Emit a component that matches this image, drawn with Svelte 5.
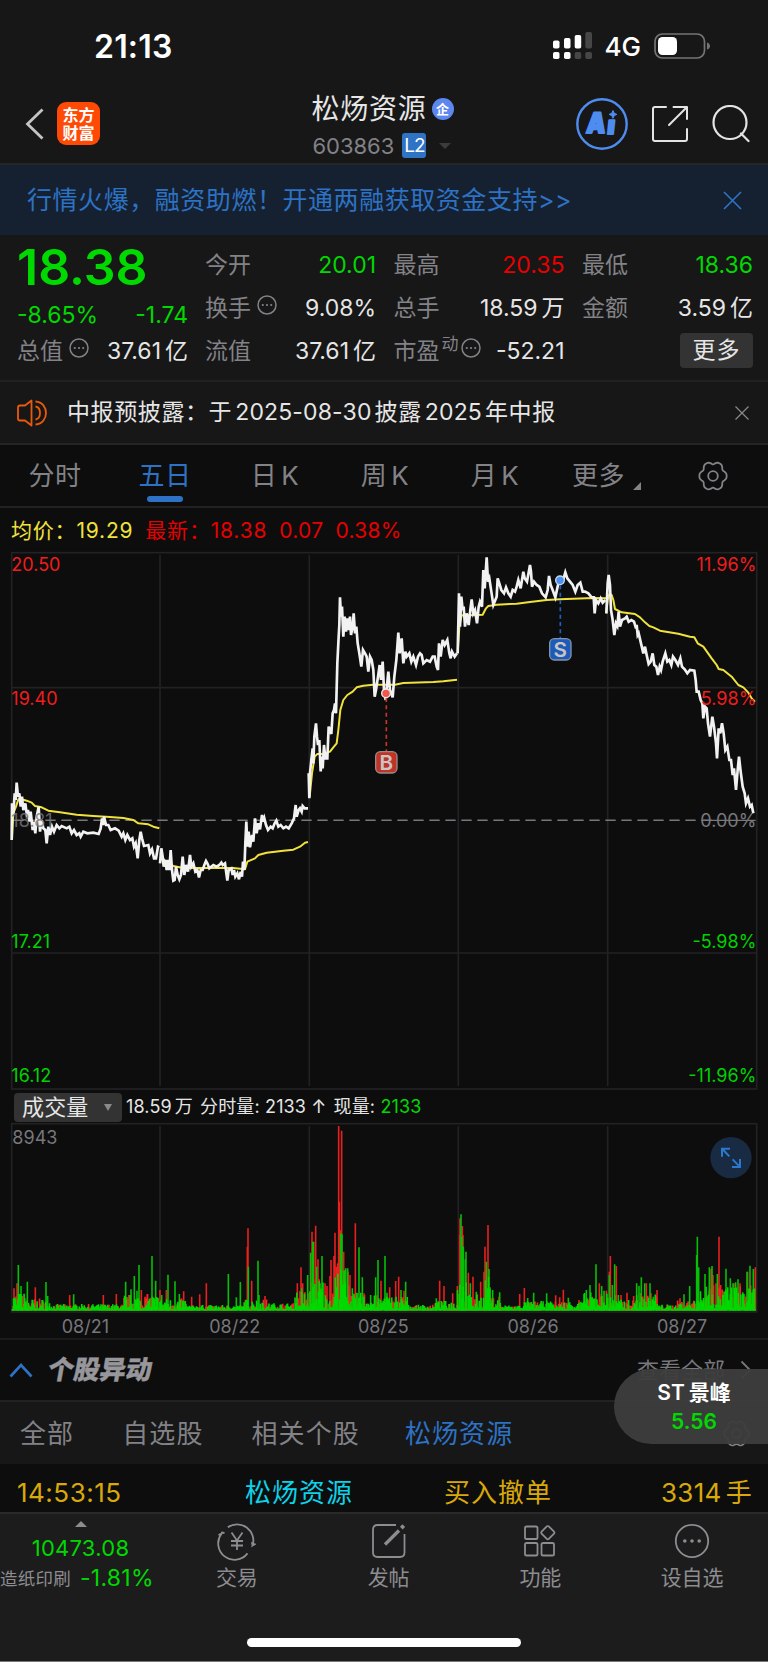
<script lang="ts">
	type Tone = 'up' | 'down' | 'plain';

	const quotes: { label: string; value: string; tone: Tone; info?: boolean; sup?: string }[] = [
		{ label: '今开', value: '20.01', tone: 'down' },
		{ label: '最高', value: '20.35', tone: 'up' },
		{ label: '最低', value: '18.36', tone: 'down' },
		{ label: '换手', value: '9.08%', tone: 'plain', info: true },
		{ label: '总手', value: '18.59 万', tone: 'plain' },
		{ label: '金额', value: '3.59 亿', tone: 'plain' },
		{ label: '流值', value: '37.61 亿', tone: 'plain' },
		{ label: '市盈', value: '-52.21', tone: 'plain', info: true, sup: '动' }
	];

	const periods = ['分时', '五日', '日 K', '周 K', '月 K'];
	let period = $state('五日');

	const filters = ['全部', '自选股', '相关个股', '松炀资源'];
	let filter = $state('松炀资源');

	let showBanner = $state(true);
	let showNotice = $state(true);

	// chart geometry is kept in @3x units
	const gridX = [480, 928, 1375, 1823];

	const price = [
		'35,990 36,880 40,915 44,850 47,870 50,818 54,860 58,850 62,890 66,860 70,900 76,880 80,910 84,900 88,935 92,905 98,960 102,935 106,970 110,920 116,890 120,965 125,930 130,955 136,960 140,1000 145,950 150,975 156,950 162,965 170,945 178,955 185,948 200,955 208,950 215,970 222,960 230,975 238,970 242,980 250,965 262,970 280,968 296,972 302,955 306,925 309,945 312,920 318,945 325,945 332,960 345,955 356,962 365,980 370,970 376,990 382,975 390,990 397,985 402,1010 407,1000 413,1045 418,990 422,965 426,985 432,1008 445,1005 450,1030 456,1018 462,1045 468,1045 474,1010 478,1012',
		'480,1060 484,1015 488,1040 491,1070 496,1050 500,1080 504,1050 508,1080 512,1020 516,1080 520,1112 524,1110 528,1070 533,1095 538,1108 543,1095 548,1040 553,1095 558,1065 564,1085 570,1035 574,1070 580,1060 586,1085 592,1080 597,1102 602,1080 608,1080 613,1065 618,1053 622,1060 628,1075 640,1065 650,1070 658,1065 664,1058 668,1065 675,1060 682,1112 686,1080 694,1075 698,1095 702,1080 706,1100 712,1090 717,1108 722,1085 726,1100 729,1055 733,1080 736,1000 739,935 742,1010 746,965 750,1012 756,975 760,995 765,925 770,970 775,940 780,958 786,915 790,935 793,925 798,945 804,960 812,950 818,955 824,940 829,932 835,950 842,945 850,955 858,950 866,955 875,940 882,925 887,885 890,920 896,900 900,895 905,905 908,888 914,895 924,895',
		'926,790 928,865 930,790 934,750 938,715 940,760 943,680 948,640 951,680 954,705 958,690 962,784 966,740 968,775 972,705 976,745 982,745 986,650 990,660 994,672 998,610 1002,600 1005,580 1008,610 1012,460 1016,380 1018,345 1020,262 1023,320 1026,290 1030,380 1034,320 1038,365 1042,325 1046,360 1050,320 1053,375 1058,350 1061,310 1065,370 1069,350 1073,400 1078,430 1084,470 1089,420 1095,430 1100,440 1105,485 1110,440 1115,450 1120,480 1124,560 1128,540 1134,500 1139,465 1143,510 1148,455 1152,540 1157,570 1165,485 1170,540 1178,562 1183,500 1189,450 1195,368 1199,430 1205,385 1210,460 1216,425 1220,440 1228,430 1234,455 1240,440 1248,465 1254,440 1260,430 1265,435 1270,460 1280,450 1290,455 1298,440 1304,440 1310,470 1314,480 1317,400 1322,440 1328,390 1334,405 1342,390 1348,430 1352,445 1356,425 1364,440 1371,430',
		'1373,430 1377,250 1380,350 1384,260 1388,300 1391,290 1395,350 1400,310 1406,345 1411,300 1415,268 1420,310 1425,300 1431,340 1436,290 1440,275 1446,290 1450,180 1454,235 1460,142 1464,215 1468,205 1474,245 1480,285 1486,270 1490,260 1493,205 1498,220 1504,240 1512,250 1518,232 1525,250 1532,260 1538,240 1545,245 1550,230 1555,210 1562,235 1570,185 1574,205 1581,215 1590,165 1593,185 1596,230 1602,215 1610,225 1618,230 1626,250 1637,262 1643,240 1647,198 1652,225 1658,240 1666,262 1674,225 1680,212 1688,215 1696,187 1702,205 1710,215 1718,225 1726,245 1733,225 1741,218 1748,245 1755,245 1765,250 1775,262 1781,262 1784,310 1788,270 1795,280 1802,265 1808,278 1816,270',
		'1819,310 1823,220 1826,195 1830,225 1833,300 1838,330 1843,375 1848,340 1852,348 1856,305 1860,350 1866,330 1875,325 1880,320 1886,335 1894,330 1902,335 1908,355 1910,345 1913,375 1916,370 1923,400 1930,430 1935,410 1940,435 1946,462 1952,455 1958,430 1963,465 1969,470 1974,495 1979,470 1983,480 1988,455 1996,430 2002,455 2008,450 2014,465 2019,440 2026,450 2034,465 2041,445 2046,470 2054,478 2062,490 2070,480 2083,482 2087,510 2090,545 2096,545 2102,570 2107,580 2110,625 2115,590 2120,595 2124,640 2130,680 2137,620 2142,650 2148,700 2151,745 2156,655 2161,670 2166,640 2171,670 2176,720 2182,710 2188,750 2193,750 2198,795 2202,775 2208,840 2213,780 2217,740 2222,785 2228,830 2234,850 2238,880 2244,865 2250,890 2255,885 2260,910'
	];

	const average = [
		'36,990 40,910 48,890 55,868 65,868 80,872 95,878 105,888 125,892 145,902 180,907 230,914 280,918 330,921 370,924 400,930 415,940 445,943 460,950 478,955',
		'481,1030 488,1044 500,1058 520,1068 550,1074 600,1074 660,1074 700,1074 735,1078 742,1055 765,1045 775,1035 800,1028 850,1022 880,1019 900,1010 915,998 924,996',
		'929,860 936,790 944,740 952,732 970,732 990,725 1000,712 1010,700 1015,660 1021,600 1030,570 1042,555 1058,545 1070,532 1090,527 1120,524 1185,524 1210,519 1300,516 1330,514 1371,509',
		'1373,430 1378,350 1385,316 1410,316 1448,314 1458,295 1465,288 1490,284 1550,281 1590,276 1640,270 1680,268 1720,266 1780,264 1818,265',
		'1819,310 1823,270 1828,252 1835,255 1840,270 1845,297 1865,307 1905,312 1920,322 1935,337 1948,348 1960,352 1980,362 2035,371 2070,380 2083,382 2093,400 2110,410 2135,445 2150,465 2156,477 2170,480 2195,500 2215,525 2230,532 2245,548 2255,565 2265,575'
	];

	// typical bar height up to each x, then the bars that stand out of it
	const volumeLevels = [
		[80, 50], [150, 32], [370, 15], [480, 45], [560, 32], [730, 12], [800, 30], [880, 18],
		[930, 60], [970, 95], [1000, 50], [1050, 125], [1100, 50], [1222, 42], [1302, 13],
		[1372, 25], [1402, 110], [1452, 45], [1472, 100], [1502, 35], [1572, 12], [1752, 24],
		[1852, 50], [1902, 28], [1972, 50], [2032, 14], [2082, 26], [2112, 55], [2267, 72]
	];
	const upBars =
		'42,655 51,640 106,652 209,675 310,675 349,672 424,660 442,672 480,660 499,660 551,664 575,680 599,673 619,640 742,530 744,475 755,632 795,678 892,640 903,592 908,640 936,485 941,515 947,467 954,568 958,628 975,640 981,648 990,618 993,570 1002,558 1005,488 1010,590 1013,580 1016,168 1018,395 1021,480 1025,182 1031,545 1036,600 1044,605 1050,615 1066,460 1092,670 1143,632 1169,652 1187,633 1196,620 1212,662 1319,632 1332,648 1358,670 1372,648 1380,445 1379,495 1387,468 1389,495 1405,608 1419,620 1442,635 1452,605 1455,530 1464,465 1497,680 1559,672 1573,654 1667,676 1679,682 1690,659 1737,690 1777,680 1798,640 1819,662 1828,605 1831,558 1849,588 1863,675 1881,668 1901,678 1939,640 1971,660 2040,685 2133,596 2139,615 2148,640 2157,500 2162,645 2202,640 2220,640 2243,605 2266,592';
	const downBars =
		'55,585 63,648 82,635 138,636 143,678 221,673 377,635 393,658 403,618 411,662 417,585 456,558 467,632 485,675 504,614 525,634 538,672 685,612 709,682 721,636 745,590 774,572 777,675 905,655 923,615 932,548 938,515 940,515 950,590 960,640 966,558 1022,490 1026,493 1037,595 1043,595 1057,655 1077,532 1087,622 1112,675 1127,622 1134,570 1155,558 1161,668 1203,660 1217,635 1309,685 1383,433 1386,500 1390,530 1396,568 1398,545 1411,640 1429,665 1459,575 1467,597 1470,652 1478,660 1499,667 1583,684 1601,668 1640,670 1705,683 1752,672 1759,660 1770,645 1788,583 1805,648 1812,662 1828,615 1837,645 1844,583 1855,675 1910,640 1917,648 1924,622 1934,640 1950,640 1960,680 2052,673 2069,648 2090,555 2092,500 2096,592 2105,690 2115,612 2119,650 2128,592 2136,588 2152,612 2178,596 2191,625 2199,640 2207,637 2214,628 2241,605 2250,587 2260,597';

	const VOLUME_BASE = 722;

	function bars(list: string) {
		return list
			.split(' ')
			.map((p) => {
				const [x, y] = p.split(',');
				return `M${x} ${VOLUME_BASE}V${y}`;
			})
			.join('');
	}

	function minuteBars() {
		let seed = 7;
		const rnd = () => (seed = (seed * 16807) % 2147483647) / 2147483647;
		const out = { up: '', down: '' };
		for (let x = 37; x < 2267; x += 1.86) {
			const level = volumeLevels.find(([end]) => x < end)?.[1] ?? 20;
			const h = 5 + level * Math.pow(rnd(), 1.4);
			const side = rnd() < 0.4 ? 'up' : 'down';
			out[side] += `M${x.toFixed(1)} ${VOLUME_BASE}v${(-h).toFixed(1)}`;
			if (side === 'down') continue;
			out.down += `M${x.toFixed(1)} ${VOLUME_BASE}v${(-h * 0.25).toFixed(1)}`;
		}
		return out;
	}
	const minutes = minuteBars();

	const days = [
		{ x: 256, label: '08/21' },
		{ x: 704, label: '08/22' },
		{ x: 1150, label: '08/25' },
		{ x: 1599, label: '08/26' },
		{ x: 2046, label: '08/27' }
	];

	// six soft lobes around a circle
	const gearOutline = Array.from({ length: 72 }, (_, i) => {
		const a = (i / 72) * Math.PI * 2;
		const r = 12.6 + 1.3 * Math.cos(a * 6) - 0.25 * Math.cos(a * 12);
		return `${(15 + r * Math.cos(a)).toFixed(2)},${(15 + r * 1.06 * Math.sin(a)).toFixed(2)}`;
	}).join(' ');
</script>

{#snippet info()}
	<svg class="info" width="20" height="20" viewBox="0 0 20 20">
		<circle cx="10" cy="10" r="9" fill="none" stroke="currentColor" stroke-width="1.5" />
		<path d="M5.8 10h.01M10 10h.01M14.2 10h.01" stroke="currentColor" stroke-width="2.2" stroke-linecap="round" />
	</svg>
{/snippet}

{#snippet gear(size: number)}
	<svg width={size} height={size} viewBox="0 0 30 30" fill="none" stroke="currentColor" stroke-width="1.8" stroke-linejoin="round">
		<polygon points={gearOutline} />
		<circle cx="15" cy="15" r="4.8" />
	</svg>
{/snippet}

<div class="page">
	<div class="status">
		<span class="clock">21:13</span>
		<svg class="signal" width="40" height="28" viewBox="0 0 40 28">
			<g fill="#fff">
				<rect x="0" y="8.5" width="6.5" height="8" rx="1.8" />
				<rect x="11" y="6" width="6.5" height="10.5" rx="1.8" />
				<rect x="21.7" y="3" width="6.5" height="13.5" rx="1.8" />
				<rect x="0" y="20" width="6.5" height="7" rx="1.8" />
				<rect x="11" y="20" width="6.5" height="7" rx="1.8" />
			</g>
			<g fill="#464646">
				<rect x="32.3" y="0" width="6.7" height="16.5" rx="1.8" />
				<rect x="21.7" y="20" width="6.5" height="7" rx="1.8" />
				<rect x="32.3" y="20" width="6.7" height="7" rx="1.8" />
			</g>
		</svg>
		<span class="network">4G</span>
		<svg class="battery" width="58" height="26" viewBox="0 0 58 26">
			<rect x="1" y="1" width="49.5" height="24" rx="7.5" fill="none" stroke="#747474" stroke-width="1.7" />
			<rect x="4" y="4" width="19" height="18" rx="4.5" fill="#fff" />
			<path d="M53 9.5c4 1 4 6 0 7z" fill="#747474" />
		</svg>
	</div>

	<header>
		<div class="head-left">
			<svg width="20" height="32" viewBox="0 0 20 32" fill="none" stroke="#c4c4c4" stroke-width="2.8">
				<path d="M17.5 1.5 2.5 16l15 14.5" />
			</svg>
			<div class="logo"><span>东方</span><span>财富</span></div>
		</div>
		<div class="head-title">
			<div class="name">
				<span>松炀资源</span>
				<span class="corp">企</span>
			</div>
			<div class="code">
				<span>603863</span>
				<b>L2</b>
				<i class="drop"></i>
			</div>
		</div>
		<div class="head-right">
			<svg width="52" height="52" viewBox="0 0 52 52">
				<circle cx="26" cy="26" r="24.7" fill="none" stroke="#4f8cf0" stroke-width="2.4" />
				<g fill="#4f8cf0" stroke="#4f8cf0" stroke-width="2.2" stroke-linejoin="round" font-family="Inter" font-weight="900">
					<text x="10" y="35.5" font-size="28" textLength="19" lengthAdjust="spacingAndGlyphs" transform="skewX(-6) translate(3.5 0)">A</text>
					<text x="31" y="36" font-size="25" transform="skewX(-6) translate(3.5 0)">ı</text>
				</g>
				<path d="M37 12.5l1.2 2.7 2.7 1.2-2.7 1.2-1.2 2.7-1.2-2.7-2.7-1.2 2.7-1.2z" fill="#4f8cf0" stroke="#4f8cf0" />
			</svg>
			<svg width="38" height="38" viewBox="0 0 38 38" fill="none" stroke="#e4e4e4" stroke-width="2" stroke-linejoin="round" stroke-linecap="round">
				<path d="M15 2H4a2 2 0 0 0-2 2v30a2 2 0 0 0 2 2h30a2 2 0 0 0 2-2V24" />
				<path d="M22.5 2H36v12M36 2 18 20" />
			</svg>
			<svg width="38" height="38" viewBox="0 0 38 38" fill="none" stroke="#e4e4e4" stroke-width="2.2" stroke-linecap="round">
				<circle cx="18" cy="17.5" r="16.5" />
				<path d="M29 28.5 36.5 36" />
			</svg>
		</div>
	</header>

	{#if showBanner}
		<div class="banner">
			<span>行情火爆，融资助燃！开通两融获取资金支持&gt;&gt;</span>
			<button aria-label="关闭" onclick={() => (showBanner = false)}>
				<svg width="19" height="19" viewBox="0 0 19 19" stroke="#2d72c4" stroke-width="1.7">
					<path d="M1 1l17 17M18 1 1 18" />
				</svg>
			</button>
		</div>
	{/if}

	<section class="quote">
		<div class="last">
			<strong>18.38</strong>
			<div class="change"><span>-8.65%</span><span>-1.74</span></div>
			<div class="cell">
				<span class="label">总值{@render info()}</span>
				<span class="value plain">37.61<em>亿</em></span>
			</div>
		</div>
		<div class="cells">
			{#each quotes as q}
				{@const [num, unit] = q.value.split(' ')}
				<div class="cell">
					<span class="label">
						{q.label}{#if q.sup}<sup>{q.sup}</sup>{/if}{#if q.info}{@render info()}{/if}
					</span>
					<span class="value {q.tone}">{num}{#if unit}<em>{unit}</em>{/if}</span>
				</div>
			{/each}
			<div class="cell end"><button class="more">更多</button></div>
		</div>
	</section>

	{#if showNotice}
		<div class="notice">
			<svg width="32" height="28" viewBox="0 0 32 28" fill="none" stroke="#ea5a0c" stroke-width="1.8" stroke-linejoin="round">
				<path d="M14.5 1.5v25L8 21.5H3q-2 0-2-2v-11q0-2 2-2h5z" />
				<path d="M18.5 7.5c6 1 6 12 0 13M18.5 2.5c14 1 14 22 0 23" />
			</svg>
			<span>中报预披露：于<em>2025-08-30</em>披露<em>2025</em>年中报</span>
			<button aria-label="关闭" onclick={() => (showNotice = false)}>
				<svg width="14" height="14" viewBox="0 0 14 14" stroke="#8a8a8a" stroke-width="1.2">
					<path d="M.5.5l13 13M13.5.5l-13 13" />
				</svg>
			</button>
		</div>
	{/if}

	<nav class="periods">
		{#each periods as p}
			<button class:active={period === p} onclick={() => (period = p)}>{p}</button>
		{/each}
		<button class="with-corner">更多<i></i></button>
		<button class="settings" aria-label="设置">{@render gear(30)}</button>
	</nav>

	<section class="chart">
		<div class="legend">
			<span class="avg">均价：19.29</span>
			<span class="new">最新：18.38</span>
			<span class="new diff">0.07</span>
			<span class="new diff">0.38%</span>
		</div>

		<svg width="768" height="545" viewBox="0 114 2304 1635">
			<g fill="none" stroke="#222225" stroke-width="5">
				<rect x="35" y="128" width="2235" height="1609" />
				<path d="M35 533H2270M35 1329H2270" />
				{#each gridX as x}
					<path d="M{x} 135V1728" />
				{/each}
			</g>
			<path class="zero" d="M40 931H2140" />

			{#each average as line}
				<polyline points={line} fill="none" stroke="#f0e23c" stroke-width="6" stroke-linejoin="round" />
			{/each}
			{#each price as line}
				<polyline points={line} fill="none" stroke="#f2f2f2" stroke-width="8" />
			{/each}

			<g class="axis">
				<text x="34" y="182" class="up">20.50</text>
				<text x="34" y="584" class="up">19.40</text>
				<text x="34" y="950" opacity="0.8">18.81</text>
				<text x="34" y="1315" class="down">17.21</text>
				<text x="34" y="1717" class="down">16.12</text>
			</g>
			<g class="axis" text-anchor="end">
				<text x="2269" y="182" class="up">11.96%</text>
				<text x="2269" y="584" class="up">5.98%</text>
				<text x="2269" y="950">0.00%</text>
				<text x="2269" y="1315" class="down">-5.98%</text>
				<text x="2269" y="1717" class="down">-11.96%</text>
			</g>

			<g class="mark">
				<path d="M1159 564V724" stroke="#c8352a" />
				<circle cx="1158" cy="550" r="13" fill="#f4564a" stroke="#eee" />
				<rect x="1127" y="725" width="64" height="64" rx="14" fill="#bf3427" stroke="#9a8a88" />
				<text x="1159" y="779">B</text>
				<path d="M1681 226V384" stroke="#1d60c4" />
				<circle cx="1680" cy="211" r="13" fill="#4b90f2" stroke="#c9d6ea" />
				<rect x="1649" y="386" width="64" height="64" rx="14" fill="#1c5cb8" stroke="#8492aa" />
				<text x="1681" y="440">S</text>
			</g>
			<path d="M2112 931H2267" stroke="#77777c" stroke-width="4" />
		</svg>

		<div class="volume-bar">
			<button class="indicator">成交量<i></i></button>
			<span>18.59<em>万</em></span>
			<span>分时量: 2133 ↑</span>
			<span>现量: <b>2133</b></span>
		</div>

		<svg width="768" height="217" viewBox="0 153 2304 651">
			<g fill="none" stroke="#222225" stroke-width="5">
				<rect x="35" y="161" width="2235" height="565" />
				{#each gridX as x}
					<path d="M{x} 168V722" />
				{/each}
			</g>
			<g fill="none" stroke-width="4.8">
				<path d={bars(upBars)} stroke="#ea2020" />
				<path d={minutes.up} stroke="#f92323" />
				<path d={bars(downBars)} stroke="#05c005" />
				<path d={minutes.down} stroke="#00d900" />
			</g>
			<g class="axis">
				<text x="37" y="222">8943</text>
				{#each days as d}
					<text x={d.x} y="788" text-anchor="middle">{d.label}</text>
				{/each}
			</g>
			<g fill="none" stroke="#2d78cf" stroke-width="6">
				<circle cx="2193" cy="263" r="62" fill="#182b43" stroke="none" />
				<path d="M2166 260V236H2190M2167 237L2188 259M2196 291H2220V267M2219 290L2198 268" />
			</g>
		</svg>
	</section>

	<div class="section-head">
		<svg width="24" height="16" viewBox="0 0 24 16" fill="none" stroke="#2d72c4" stroke-width="2.6">
			<path d="M1.5 14.5 12 3l10.5 11.5" />
		</svg>
		<h2>个股异动</h2>
		<a href="#all">查看全部
			<svg width="12" height="20" viewBox="0 0 12 20" fill="none" stroke="currentColor" stroke-width="1.8">
				<path d="M1.5 1.5 10 10l-8.5 8.5" />
			</svg>
		</a>
	</div>

	<nav class="filters">
		{#each filters as f}
			<button class:active={filter === f} onclick={() => (filter = f)}>{f}</button>
		{/each}
		<span class="filter-gear">{@render gear(27)}</span>
	</nav>

	<div class="event">
		<span class="time">14:53:15</span>
		<span class="stock">松炀资源</span>
		<span class="action">买入撤单</span>
		<span class="lots">3314<em>手</em></span>
	</div>

	<footer>
		<div class="index">
			<i></i>
			<span>10473.08</span>
			<div><small>造纸印刷</small><span>-1.81%</span></div>
		</div>
		<button>
			<svg width="40" height="36" viewBox="0 0 40 36">
				<path d="M10.8 4.2A16.3 16.3 0 0 1 35.6 22.500l3-1.8M35.600 22.500l-.8-3.400M30.500 30.400A16.300 16.300 0 0 1 4.600 10.500L1.500 12M4.600 10.500 5 9.500 7.500 10" />
				<path d="M14.5 9.5 20 17.5l5.5-8M20 17.5V27M14 18h12M14 22.5h12" />
			</svg>
			交易
		</button>
		<button>
			<svg width="36" height="36" viewBox="0 0 36 36">
				<path d="M25 2H6.5Q2 2 2 6.5v23Q2 34 6.5 34h22.500q4.500 0 4.500-4.500V11" />
				<path d="M14 21.5 28 7.5" stroke-width="3.4" />
				<path d="M30.3 5.2 32.8 2.7" stroke-width="3.8" />
			</svg>
			发帖
		</button>
		<button>
			<svg width="34" height="36" viewBox="0 0 34 36">
				<rect x="2" y="3.5" width="12.5" height="12.5" rx="1.6" />
				<rect x="2" y="20" width="12.5" height="12.5" rx="1.6" />
				<rect x="18.5" y="20" width="12.5" height="12.5" rx="1.6" />
				<rect x="19.7" y="4.6" width="10.2" height="10.2" rx="1.4" transform="rotate(45 24.8 9.7)" />
			</svg>
			功能
		</button>
		<button>
			<svg width="36" height="36" viewBox="0 0 36 36">
				<circle cx="18" cy="18" r="16.2" />
				<path d="M10.8 18h.01M18 18h.01M25.2 18h.01" stroke-width="3.6" stroke-linecap="round" />
			</svg>
			设自选
		</button>
		<div class="home"></div>
	</footer>

	<div class="float">
		<span>ST<em>景峰</em></span>
		<b>5.56</b>
	</div>
</div>

<style>
	:global(body) {
		background: #0d0d0d;
	}

	.page {
		position: relative;
		width: 768px;
		height: 1662px;
		overflow: hidden;
		background: #0d0d0d;
		color: #e6e6e6;
		font-family: Inter, 'Noto Sans CJK SC', sans-serif;
		font-size: 23px;
		font-weight: 400;
		line-height: 1;
		white-space: nowrap;
	}

	.page * {
		box-sizing: border-box;
	}

	svg {
		display: block;
		flex: none;
	}

	em,
	i {
		font-style: normal;
	}

	button {
		padding: 0;
		border: 0;
		background: none;
		color: inherit;
		font: inherit;
		letter-spacing: inherit;
		word-spacing: inherit;
	}

	.status {
		display: flex;
		align-items: center;
		height: 84px;
		padding: 8px 56px 0 94px;
		background: #171717;
		color: #fff;
	}

	.clock {
		margin-top: 1px;
		font-size: 32px;
		font-weight: 600;
		letter-spacing: 0.2px;
	}

	.signal {
		margin-left: auto;
	}

	.network {
		margin: 2px 13px 0 12px;
		font-size: 26px;
		font-weight: 500;
	}

	header {
		display: grid;
		grid-template-columns: 1fr auto 1fr;
		align-items: center;
		height: 81px;
		padding: 0 18px 0 25px;
		border-bottom: 2px solid #252525;
		background: #171717;
	}

	.head-left,
	.head-right {
		display: flex;
		align-items: center;
	}

	.logo {
		display: flex;
		flex-direction: column;
		align-items: center;
		justify-content: center;
		width: 43px;
		height: 43px;
		margin-left: 12px;
		border-radius: 9px;
		background: #ff4a05;
		color: #fff;
		font-size: 16px;
		font-weight: 700;
		line-height: 18px;
	}

	.head-title {
		display: flex;
		flex-direction: column;
		gap: 10px;
		padding: 6px 10px 0 0;
	}

	.name {
		display: flex;
		align-items: center;
		gap: 5px;
		font-size: 28px;
		letter-spacing: 0.8px;
	}

	.corp {
		display: flex;
		align-items: center;
		justify-content: center;
		width: 22px;
		height: 22px;
		border-radius: 50%;
		background: #5b87ee;
		color: #fff;
		font-size: 13px;
		font-weight: 700;
		letter-spacing: 0;
	}

	.code {
		display: flex;
		align-items: center;
		padding-left: 1px;
		color: #828287;
		font-size: 22px;
	}

	.code b {
		display: flex;
		align-items: center;
		justify-content: center;
		width: 24px;
		height: 25px;
		margin: 0 13px 0 8px;
		border-radius: 3px;
		background: #2e73c4;
		color: #fff;
		font-size: 19px;
		font-weight: 400;
		letter-spacing: -1px;
	}

	.drop {
		border: 6px solid transparent;
		border-top-color: #3c3c3c;
		border-bottom: 0;
	}

	.head-right {
		justify-content: flex-end;
		gap: 23px;
	}

	.banner {
		display: flex;
		align-items: center;
		justify-content: space-between;
		height: 70px;
		padding: 0 26px 0 27px;
		background: #152130;
		color: #2d72c4;
		font-size: 25px;
		letter-spacing: 0.55px;
	}

	.quote {
		display: flex;
		gap: 17px;
		height: 147px;
		padding: 9px 15px 0 17px;
		border-bottom: 2px solid #212121;
		background: #171717;
	}

	.last {
		display: flex;
		flex-direction: column;
		flex: none;
		width: 171px;
		color: #00d900;
	}

	.last strong {
		height: 48px;
		font-size: 50px;
		font-weight: 600;
		line-height: 47px;
	}

	.change {
		display: flex;
		justify-content: space-between;
		height: 27px;
		margin: 10px 0 1px;
		line-height: 27px;
	}

	.cells {
		display: grid;
		flex: 1;
		grid-template-columns: repeat(3, 171px);
		grid-auto-rows: 43px;
		column-gap: 17.5px;
	}

	.cell {
		display: flex;
		align-items: center;
		justify-content: space-between;
		height: 43px;
	}

	.cell.end {
		justify-content: flex-end;
	}

	.label {
		display: flex;
		align-items: center;
		color: #828287;
	}

	.label .info {
		margin: -8px 0 0 6px;
	}

	.label sup {
		margin: -14px -4px 0 2px;
		font-size: 17px;
		line-height: 1;
	}

	.value em {
		margin-left: 4px;
	}

	.up {
		color: #e60000;
	}

	.down {
		color: #00d900;
	}

	.plain {
		color: #e6e6e6;
	}

	.more {
		width: 73px;
		height: 35px;
		margin-top: -3px;
		border-radius: 4px;
		background: #333;
		letter-spacing: 1px;
	}

	.notice {
		display: flex;
		align-items: center;
		height: 63px;
		padding: 0 19px 0 17px;
		border-bottom: 2px solid #252525;
		background: #171717;
		letter-spacing: 0.6px;
	}

	.notice span {
		flex: 1;
		margin-left: 18px;
	}

	.notice em {
		margin: 0 3px;
		letter-spacing: 0.15px;
	}

	.periods {
		display: flex;
		height: 63px;
		border-bottom: 2px solid #222;
		color: #828287;
		font-size: 26px;
		letter-spacing: 0.6px;
		word-spacing: -4px;
	}

	.periods button {
		position: relative;
		width: 110px;
	}

	.periods .active {
		color: #2d72c4;
	}

	.periods .active::after {
		content: '';
		position: absolute;
		bottom: 4px;
		left: 37px;
		width: 36px;
		height: 6px;
		border-radius: 3px;
		background: #2d72c4;
	}

	.periods .with-corner {
		display: flex;
		align-items: center;
		padding-left: 22px;
	}

	.with-corner i {
		margin: 20px 0 0 8px;
		border: 4px solid #828287;
		border-top-color: transparent;
		border-left-color: transparent;
	}

	.periods .settings {
		display: flex;
		align-items: center;
		justify-content: center;
		width: 106px;
	}

	.legend {
		display: flex;
		align-items: center;
		gap: 12px;
		height: 40px;
		padding: 4px 11px 0;
		font-size: 21px;
		letter-spacing: 0.8px;
	}

	.legend .avg {
		color: #f0e23c;
	}

	.legend .new {
		color: #e60000;
	}

	.legend .diff {
		letter-spacing: 0.3px;
	}

	.axis text {
		fill: #77777c;
		font-size: 54px;
	}

	.axis .up {
		fill: #f01d1d;
	}

	.axis .down {
		fill: #00d200;
	}

	.zero {
		fill: none;
		stroke: #77777c;
		stroke-width: 4.5;
		stroke-dasharray: 31 17;
	}

	.mark {
		stroke-width: 4;
	}

	.mark path {
		stroke-width: 5;
		stroke-dasharray: 12 10;
	}

	.mark text {
		fill: #c9c5c5;
		stroke: none;
		font-size: 62px;
		font-weight: 600;
		text-anchor: middle;
	}

	.volume-bar {
		display: flex;
		align-items: center;
		gap: 7px;
		height: 28px;
		padding-left: 14px;
		font-size: 18px;
		letter-spacing: 0.15px;
	}

	.volume-bar em {
		margin-left: 3px;
	}

	.volume-bar b {
		color: #00d900;
		font-weight: 400;
	}

	.indicator {
		display: flex;
		align-items: center;
		flex: none;
		width: 108px;
		height: 29px;
		margin-right: -3px;
		padding: 0 10px 0 8px;
		border-radius: 4px;
		background: #333;
		font-size: 22px;
	}

	.indicator i {
		margin-left: auto;
		border: 4px solid transparent;
		border-top: 7px solid #8a8a8e;
		border-bottom: 0;
	}

	.section-head {
		display: flex;
		align-items: center;
		height: 64px;
		padding: 0 16px 0 9px;
		border-top: 2px solid #1b1b1b;
		border-bottom: 2px solid #222;
	}

	.section-head h2 {
		margin: 0 auto 0 15px;
		color: #96969b;
		font-size: 26px;
		font-weight: 900;
		-webkit-text-stroke: 0.4px #96969b;
		transform: skewX(-10deg);
	}

	.section-head a {
		display: flex;
		align-items: center;
		gap: 15px;
		color: #77777c;
		font-size: 22px;
		text-decoration: none;
	}

	.filters {
		display: flex;
		align-items: center;
		gap: 48px;
		height: 62px;
		padding: 1px 18px 0 20px;
		background: #171717;
		color: #828287;
		font-size: 26px;
		letter-spacing: 1.1px;
	}

	.filters .active {
		margin-left: -3px;
		color: #2d72c4;
	}

	.filter-gear {
		margin-left: auto;
	}

	.event {
		display: grid;
		grid-template-columns: 228px 199px 1fr auto;
		align-items: center;
		height: 48px;
		padding: 10px 16px 0 17px;
		color: #d8a909;
		font-size: 26px;
		letter-spacing: 1px;
	}

	.event .time {
		letter-spacing: 0.5px;
	}

	.event .lots {
		letter-spacing: 0.3px;
	}

	.event .stock {
		color: #0cd3e8;
	}

	.event em {
		margin-left: 4px;
	}

	footer {
		display: grid;
		grid-template-columns: 161px repeat(4, 1fr);
		grid-template-rows: 1fr 23px;
		height: 150px;
		border-top: 2px solid #2a2a2a;
		border-bottom: 1px solid #777;
		background: #1c1c1c;
		color: #8c8c91;
	}

	footer button {
		display: flex;
		flex-direction: column;
		align-items: center;
		justify-content: flex-start;
		gap: 8px;
		padding-top: 9px;
		font-size: 21px;
	}

	footer button svg {
		overflow: visible;
		fill: none;
		stroke: currentColor;
		stroke-width: 1.8;
	}

	.index {
		display: flex;
		flex-direction: column;
		align-items: center;
		padding-top: 2px;
		color: #00d900;
		font-size: 22px;
		letter-spacing: 0.25px;
	}

	.index i {
		margin: 5px 0 10px;
		border: 6px solid transparent;
		border-top: 0;
		border-bottom-color: #8c8c91;
	}

	.index div {
		display: flex;
		align-items: center;
		gap: 9px;
		align-self: flex-start;
		margin-top: 8px;
		font-size: 23px;
	}

	.index small {
		color: #8c8c91;
		font-size: 17.5px;
	}

	.home {
		grid-column: 1 / -1;
		justify-self: center;
		width: 274px;
		height: 9px;
		border-radius: 5px;
		background: #fff;
	}

	.float {
		position: absolute;
		top: 1369px;
		right: 0;
		display: flex;
		flex-direction: column;
		align-items: center;
		justify-content: center;
		gap: 8px;
		width: 154px;
		height: 75px;
		padding-left: 6px;
		border-radius: 38px 0 0 38px;
		background: rgba(61, 61, 61, 0.96);
		color: #fff;
		font-size: 21px;
		font-weight: 600;
	}

	.float em {
		margin-left: 4px;
	}

	.float b {
		color: #00d900;
		font-weight: 600;
	}
</style>
